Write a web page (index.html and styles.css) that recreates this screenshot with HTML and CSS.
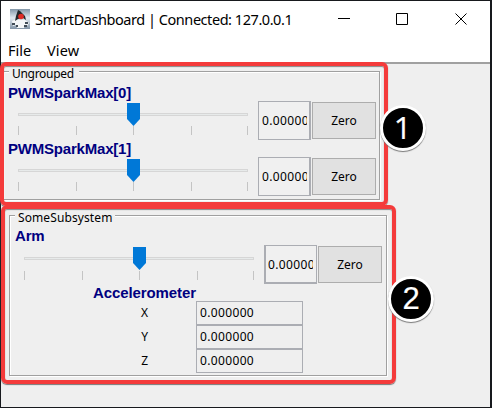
FILE: index.html
```html
<!DOCTYPE html>
<html lang="en">
<head>
<meta charset="utf-8">
<title>SmartDashboard</title>
<link rel="stylesheet" href="styles.css">
</head>
<body>
<div class="window">
  <header class="titlebar">
    <svg class="app-icon" width="20" height="20" viewBox="0 0 20 20">
      <defs><linearGradient id="g" x1="0" y1="0" x2="0" y2="1"><stop offset="0" stop-color="#8296a8"/><stop offset=".45" stop-color="#e2e9f0"/><stop offset="1" stop-color="#8294a7"/></linearGradient></defs>
      <rect width="20" height="20" fill="url(#g)"/>
      <path d="M2 12 6 10l3 1 6 0 4 3-2 3-2-1-1 3H7l-1-3-3 1z" fill="#f4f6f8"/>
      <path d="M8 1 10 2l5 5 1 4-3-2-5 1-3 2 1-5z" fill="#24282c"/>
      <path d="M2 14h3v2H2zM6 16h2v2H6zM15 13h3v2h-3zM14 16h3v2h-3z" fill="#424d58"/>
      <circle cx="11" cy="7.5" r="2.8" fill="#df2b26"/>
    </svg>
    <span class="title">SmartDashboard | Connected: 127.0.0.1</span>
    <svg class="controls" width="130" height="14" viewBox="0 0 130 14" fill="none" stroke="#000" stroke-width="1">
      <path d="M0 6.5H12M58.5 1.5h11v11h-11zM117.5 1.5l11 11M128.5 1.5l-11 11"/>
    </svg>
  </header>
  <nav class="menu"><span class="file">File</span><span class="view">View</span></nav>
  <main class="dashboard">
    <section class="group ungrouped">
      <h2 class="legend">Ungrouped</h2>
      <div class="widget">
        <h3>PWMSparkMax[0]</h3>
        <div class="motor">
          <svg class="slider" width="232" height="39" viewBox="0 0 232 39"><rect x=".5" y="11.5" width="229" height="2" class="track"/><path class="ticks" d="M.5 24v9M58.5 24v9M115.5 24v9M173.5 24v9M229.5 24v9"/><path class="thumb" d="M109 1h13v16l-6.5 7-6.5-7z"/></svg>
          <div class="field"><span>0.00000</span></div><button>Zero</button>
        </div>
      </div>
      <div class="widget">
        <h3>PWMSparkMax[1]</h3>
        <div class="motor">
          <svg class="slider" width="232" height="39" viewBox="0 0 232 39"><rect x=".5" y="11.5" width="229" height="2" class="track"/><path class="ticks" d="M.5 24v9M58.5 24v9M115.5 24v9M173.5 24v9M229.5 24v9"/><path class="thumb" d="M109 1h13v16l-6.5 7-6.5-7z"/></svg>
          <div class="field"><span>0.00000</span></div><button>Zero</button>
        </div>
      </div>
    </section>
    <section class="group subsystem">
      <h2 class="legend">SomeSubsystem</h2>
      <div class="widget">
        <h3>Arm</h3>
        <div class="motor">
          <svg class="slider" width="232" height="39" viewBox="0 0 232 39"><rect x=".5" y="10.5" width="229" height="2" class="track"/><path class="ticks" d="M.5 24v9M58.5 24v9M115.5 24v9M173.5 24v9M229.5 24v9"/><path class="thumb" d="M109 0h13v16l-6.5 7-6.5-7z"/></svg>
          <div class="field"><span>0.00000</span></div><button>Zero</button>
        </div>
      </div>
      <div class="accelerometer">
        <h3>Accelerometer</h3>
        <div class="axis"><label>X</label><div class="value">0.000000</div></div>
        <div class="axis"><label>Y</label><div class="value">0.000000</div></div>
        <div class="axis"><label>Z</label><div class="value">0.000000</div></div>
      </div>
    </section>
  </main>
</div>
<div class="outline outline-one"></div>
<div class="outline outline-two"></div>
<div class="badge badge-one">1</div>
<div class="badge badge-two">2</div>
</body>
</html>
```
FILE: styles.css
```css
* { box-sizing: border-box; }
body {
  margin: 0;
  width: 492px;
  height: 408px;
  padding: 1px 2px 1px 1px;
  overflow: hidden;
  background: #17191d;
  color: #000;
  font: 12px/16px "Noto Sans", sans-serif;
}
h2, h3 { margin: 0; }
.window { width: 489px; height: 406px; background: #efefef; }
.titlebar { display: flex; align-items: center; height: 36px; padding-left: 9px; background: #fff; }
.app-icon { flex: none; }
.title { width: 295px; margin-left: 5px; font-size: 14.5px; line-height: 20px; white-space: nowrap; letter-spacing: -.45px; }
.controls { margin-left: 8px; flex: none; }
.menu { display: flex; height: 27px; padding: 3px 7px 0; border-bottom: 2px solid #a0a0a0; background: #fff; font-size: 14.5px; line-height: 20px; }
.file { width: 39px; }
.view { letter-spacing: .15px; }
.dashboard { padding: 7px 0 0 2px; }
.group { border: 1px solid #a0a0a0; box-shadow: 1px 1px #fff, inset 1px 1px #fff; }
.legend { width: max-content; height: 14px; margin-top: -6px; padding: 0 3px; background: #efefef; font-weight: 400; font-size: 12px; line-height: 16px; }
.ungrouped { width: 377px; height: 129px; padding-left: 4px; }
.ungrouped .legend { margin-left: 1px; padding-right: 5px; letter-spacing: -.3px; }
.subsystem { width: 378px; height: 161px; margin: 15px 0 0 6px; padding-left: 5px; }
.subsystem .legend { letter-spacing: .1px; }
.widget { height: 56px; }
h3 { height: 17px; color: #000080; font: bold 15px/15px "Liberation Sans", sans-serif; letter-spacing: -.2px; }
.ungrouped .legend + .widget { margin-top: 5px; }
.motor { display: flex; height: 39px; margin-left: 10px; }
.subsystem .widget { margin-top: 4px; height: 57px; }
.subsystem .motor { margin-left: 9px; margin-top: 2px; }
.slider { flex: none; display: block; }
.track { fill: #e7eaea; stroke: #d6d6d6; }
.ticks { stroke: #c4c4c4; }
.thumb { fill: #0078d7; }
.field { width: 53px; height: 39px; margin: -1px 0 0 8px; padding: 11px 4px 0 3px; border: 1px solid #abadb3; border-right-width: 2px; background: #f0f0f0; line-height: 16px; }
.subsystem .field { margin-top: -2px; border-width: 1px 1px 2px 2px; padding-left: 2px; }
.field span { display: block; width: 45px; overflow: hidden; letter-spacing: .35px; }
button { width: 64px; height: 37px; margin: 0 0 0 1px; padding: 0; border: 1px solid #adadad; background: #e1e1e1; color: #000; font: 12px/16px "Noto Sans", sans-serif; }
.subsystem button { margin-top: -1px; }
.accelerometer { width: 210px; margin: 0 0 0 78px; }
.subsystem .widget h3 { line-height: 16px; }
.accelerometer h3 { height: 16px; letter-spacing: -.1px; }
.axis { display: flex; height: 24px; align-items: center; }
.axis label { width: 55px; text-align: right; }
.value { width: 107px; height: 24px; margin-left: 48px; padding: 3px 3px 0; border: 1px solid #abadb3; letter-spacing: .35px; }
.outline { position: absolute; border: 4px solid #f43b3b; border-radius: 6px; box-shadow: 0 1px 1px #777, inset 0 1px 1px #888; }
.outline-one { left: 0; top: 62px; width: 388px; height: 144px; }
.outline-two { left: 1px; top: 205px; width: 395px; height: 179px; }
.badge { position: absolute; width: 46px; height: 46px; border: 3px solid #fff; border-radius: 50%; background: #000; color: #fff; font: 31px/39px "Liberation Sans", sans-serif; -webkit-text-stroke: .2px #fff; text-align: center; box-shadow: 0 1px 1px #777; }
.badge-one { left: 380px; top: 105px; font-family: "Open Sans", sans-serif; text-indent: -1px; }
.badge-two { left: 388px; top: 276px; }
```
